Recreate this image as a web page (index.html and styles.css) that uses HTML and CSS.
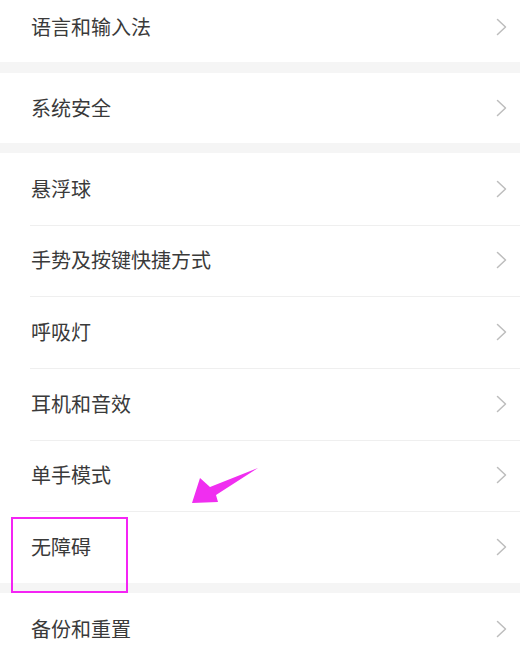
FILE: index.html
```html
<!DOCTYPE html>
<html lang="zh-CN">
<head>
<meta charset="utf-8">
<link rel="stylesheet" href="styles.css">
</head>
<body>
<div class="page">
  <div class="group first">
    <div class="row tall"><span class="label">语言和输入法</span><svg class="chev" viewBox="0 0 11 18"><path d="M1.5 1.5 L9.5 9 L1.5 16.5"/></svg></div>
  </div>
  <div class="band b1"></div>
  <div class="group">
    <div class="row tall"><span class="label">系统安全</span><svg class="chev" viewBox="0 0 11 18"><path d="M1.5 1.5 L9.5 9 L1.5 16.5"/></svg></div>
  </div>
  <div class="band"></div>
  <div class="group">
    <div class="row"><span class="label">悬浮球</span><svg class="chev" viewBox="0 0 11 18"><path d="M1.5 1.5 L9.5 9 L1.5 16.5"/></svg></div>
    <div class="row sep"><span class="label">手势及按键快捷方式</span><svg class="chev" viewBox="0 0 11 18"><path d="M1.5 1.5 L9.5 9 L1.5 16.5"/></svg></div>
    <div class="row sep"><span class="label">呼吸灯</span><svg class="chev" viewBox="0 0 11 18"><path d="M1.5 1.5 L9.5 9 L1.5 16.5"/></svg></div>
    <div class="row sep"><span class="label">耳机和音效</span><svg class="chev" viewBox="0 0 11 18"><path d="M1.5 1.5 L9.5 9 L1.5 16.5"/></svg></div>
    <div class="row sep"><span class="label">单手模式</span><svg class="chev" viewBox="0 0 11 18"><path d="M1.5 1.5 L9.5 9 L1.5 16.5"/></svg></div>
    <div class="row sep"><span class="label">无障碍</span><svg class="chev" viewBox="0 0 11 18"><path d="M1.5 1.5 L9.5 9 L1.5 16.5"/></svg></div>
  </div>
  <div class="band"></div>
  <div class="group">
    <div class="row"><span class="label">备份和重置</span><svg class="chev" viewBox="0 0 11 18"><path d="M1.5 1.5 L9.5 9 L1.5 16.5"/></svg></div>
  </div>
</div>
<div class="highlight"></div>
<svg class="annot" viewBox="0 0 520 654" width="520" height="654">
  <polygon points="192,503 200,478 210,487 258,468 216,495 218,502" fill="#f02ef0"/>
</svg>
</body>
</html>
```
FILE: styles.css
```css
html, body {
  margin: 0;
  padding: 0;
  background: #ffffff;
}
body {
  width: 520px;
  height: 654px;
  overflow: hidden;
  position: relative;
  font-family: "Noto Sans CJK SC", "Noto Sans", sans-serif;
}
.page {
  display: flex;
  flex-direction: column;
}
.group.first {
  margin-top: -8px;
}
.row {
  height: 71.67px;
  display: flex;
  align-items: center;
  justify-content: space-between;
  padding: 0 13px 0 31px;
  position: relative;
  box-sizing: border-box;
}
.row.tall {
  height: 70px;
}
.row.sep::before {
  content: "";
  position: absolute;
  left: 30px;
  right: 0;
  top: 0;
  height: 1px;
  background: #efefef;
}
.label {
  font-size: 20px;
  color: #3a3a3a;
  line-height: 1;
}
.chev {
  width: 11px;
  height: 18px;
  fill: none;
  stroke: #bdbdbd;
  stroke-width: 1.5;
  stroke-linecap: round;
  stroke-linejoin: round;
}
.band {
  height: 10px;
  background: #f5f5f5;
}
.band.b1 {
  height: 11px;
}
.highlight {
  position: absolute;
  left: 11px;
  top: 517px;
  width: 113px;
  height: 72px;
  border: 2px solid #f424f4;
}
.annot {
  position: absolute;
  left: 0;
  top: 0;
}
```
